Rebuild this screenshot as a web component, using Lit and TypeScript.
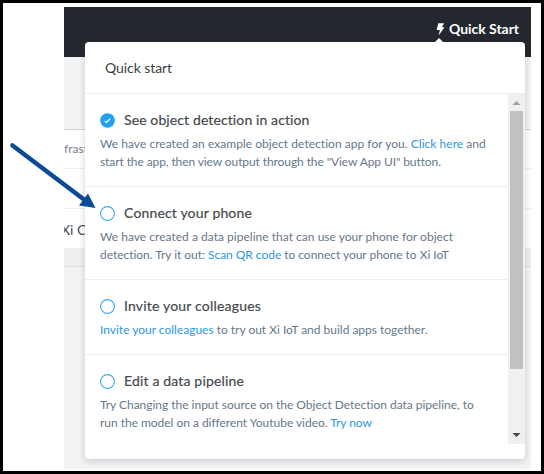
import { LitElement, html, css, svg } from "lit";
import { customElement, property } from "lit/decorators.js";

/** A single line of text whose tracking is computed so that it fills a given width. */
@customElement("fit-line")
class FitLine extends LitElement {
  @property({ type: Number }) width = 0;
  static styles = css`
    :host { display: block; white-space: pre; }
    .t { display: inline-block; }
  `;
  firstUpdated() {
    const t = this.renderRoot.querySelector(".t") as HTMLElement;
    const n = (this.textContent || "").length;
    const w = t.getBoundingClientRect().width;
    if (n && this.width) t.style.letterSpacing = (this.width - w) / n + "px";
  }
  render() {
    return html`<span class="t"><slot></slot></span>`;
  }
}

interface Line { w: number; parts: [string, boolean?][]; }
interface Step { title: string; w: number; done?: boolean; lines: Line[]; }

const STEPS: Step[] = [
  {
    title: "See object detection in action", w: 186, done: true,
    lines: [
      { w: 386, parts: [["We have created an example object detection app for you. "], ["Click here", true], [" and"]] },
      { w: 340.5, parts: [['start the app, then view output through the "View App UI" button.']] },
    ],
  },
  {
    title: "Connect your phone", w: 128,
    lines: [
      { w: 353, parts: [["We have created a data pipeline that can use your phone for object"]] },
      { w: 349, parts: [["detection. Try it out: "], ["Scan QR code", true], [" to connect your phone to Xi IoT"]] },
    ],
  },
  {
    title: "Invite your colleagues", w: 137,
    lines: [{ w: 327.5, parts: [["Invite your colleagues", true], [" to try out Xi IoT and build apps together."]] }],
  },
  {
    title: "Edit a data pipeline", w: 120,
    lines: [
      { w: 374, parts: [["Try Changing the input source on the Object Detection data pipeline, to"]] },
      { w: 271.5, parts: [["run the model on a different Youtube video. "], ["Try now", true]] },
    ],
  },
];

@customElement("app-root")
class AppRoot extends LitElement {
  static styles = css`
    * { box-sizing: border-box; }
    :host {
      display: block; position: relative; box-sizing: border-box;
      width: 544px; height: 474px; border: 3px solid #000; background: #fff;
      padding: 4px 10px 2px 61px; overflow: hidden;
      font-family: Lato, "Open Sans", sans-serif;
    }
    .page { height: 462px; background: #f2f3f5; overflow: hidden; }
    .bar {
      height: 50px; background: #23282e; color: #fff; display: flex;
      justify-content: flex-end; align-items: flex-start; padding: 13px 12px 0 0;
      font-size: 14px; line-height: 18px; font-weight: 700;
    }
    .bolt { width: 9px; height: 13px; margin: 3px 4px 0 0; }
    .gap { height: 73px; border-bottom: 1px solid #d3d5d9; }
    .row { height: 39px; background: #fff; border-bottom: 1px solid #eceef0; line-height: 38px; font-size: 12px; color: #76818c; }
    .row.mid { height: 40px; }
    .row.last { border: 0; height: 39px; line-height: 41px; font-size: 14px; color: #4b4f53; }
    .cut { display: block; margin-left: -3px; }
    .foot { height: 19px; background: #efeff0; border-bottom: 1px solid #dcdfe2; }
    .pop {
      position: absolute; left: 82px; top: 39px; width: 440px; height: 417px;
      background: #fff; border-radius: 4px; box-shadow: 0 2px 7px rgba(30, 40, 50, 0.2);
    }
    .caret { position: absolute; left: 350px; top: -4px; width: 8px; height: 4px; display: block; }
    .head { height: 52px; border-bottom: 1px solid #eceeef; padding: 16px 0 0 20px; font-size: 14px; line-height: 20px; color: #3a3e43; }
    .body { height: 350px; display: flex; }
    .list { flex: 1; min-width: 0; }
    .step { padding: 16px 0 15px 15px; border-bottom: 1px solid #eceeef; }
    .step:last-child { border: 0; }
    .title { display: flex; align-items: center; height: 20px; gap: 9px; font-size: 14px; line-height: 20px; color: #46494d; -webkit-text-stroke: 0.2px #46494d; }
    .dot { width: 15px; height: 15px; display: block; }
    .desc { padding-top: 5px; font-size: 12px; line-height: 18px; color: #66788a; }
    .link { color: #2d96e6; }
    .scroll { width: 17px; background: #f0f0f0; display: flex; flex-direction: column; align-items: center; }
    .scroll svg { width: 17px; height: 17px; display: block; }
    .thumb { width: 13px; height: 258px; background: #c1c1c1; }
    .fill { flex: 1; }
    .arrow { position: absolute; left: -3px; top: -3px; width: 110px; height: 220px; }
  `;

  dot(done?: boolean) {
    return html`<svg class="dot" viewBox="0 0 15 15">
      ${done
        ? svg`<circle cx="7.5" cy="7.5" r="7.3" fill="#22a0f0"/><path d="M4.7 7.8l1.8 1.7 3.8-3.9" fill="none" stroke="#fff" stroke-width="1.1"/>`
        : svg`<circle cx="7.5" cy="7.5" r="6.9" fill="#fff" stroke="#3fa7f0" stroke-width="1.1"/>`}
    </svg>`;
  }

  render() {
    return html`
      <div class="page">
        <div class="bar">
          <svg class="bolt" viewBox="0 0 9 13"><path d="M2.2.2H8L6 4.3h2.5L2.6 12.6 3.9 7H.7z" fill="#fff"/></svg>
          <fit-line width="70">Quick Start</fit-line>
        </div>
        <div class="gap"></div>
        <div class="row"><span>frast</span></div>
        <div class="row mid"></div>
        <div class="row last"><span class="cut">Xi C</span></div>
        <div class="foot"></div>
      </div>
      <div class="pop">
        <svg class="caret" viewBox="0 0 8 4"><path d="M0 4L4 0l4 4z" fill="#fff"/></svg>
        <div class="head"><fit-line width="67">Quick start</fit-line></div>
        <div class="body">
          <div class="list">
            ${STEPS.map((s) => html`<div class="step">
              <div class="title">${this.dot(s.done)}<fit-line .width=${s.w}>${s.title}</fit-line></div>
              <div class="desc">
                ${s.lines.map((l) => html`<fit-line .width=${l.w}>${l.parts.map(([t, a]) => (a ? html`<span class="link">${t}</span>` : t))}</fit-line>`)}
              </div>
            </div>`)}
          </div>
          <div class="scroll">
            <svg viewBox="0 0 17 17"><path d="M4.5 11l4-4 4 4z" fill="#a0a0a0"/></svg>
            <div class="thumb"></div>
            <div class="fill"></div>
            <svg viewBox="0 0 17 17"><path d="M4.5 6l4 4 4-4z" fill="#454545"/></svg>
          </div>
        </div>
      </div>
      <svg class="arrow" viewBox="0 0 110 220">
        <path d="M12.5 145.5L84 199.5" stroke="#0c4a98" stroke-width="4.6" stroke-linecap="round"/>
        <path d="M95.5 208L79 205.5 88 193.5z" fill="#0c4a98"/>
      </svg>
    `;
  }
}
